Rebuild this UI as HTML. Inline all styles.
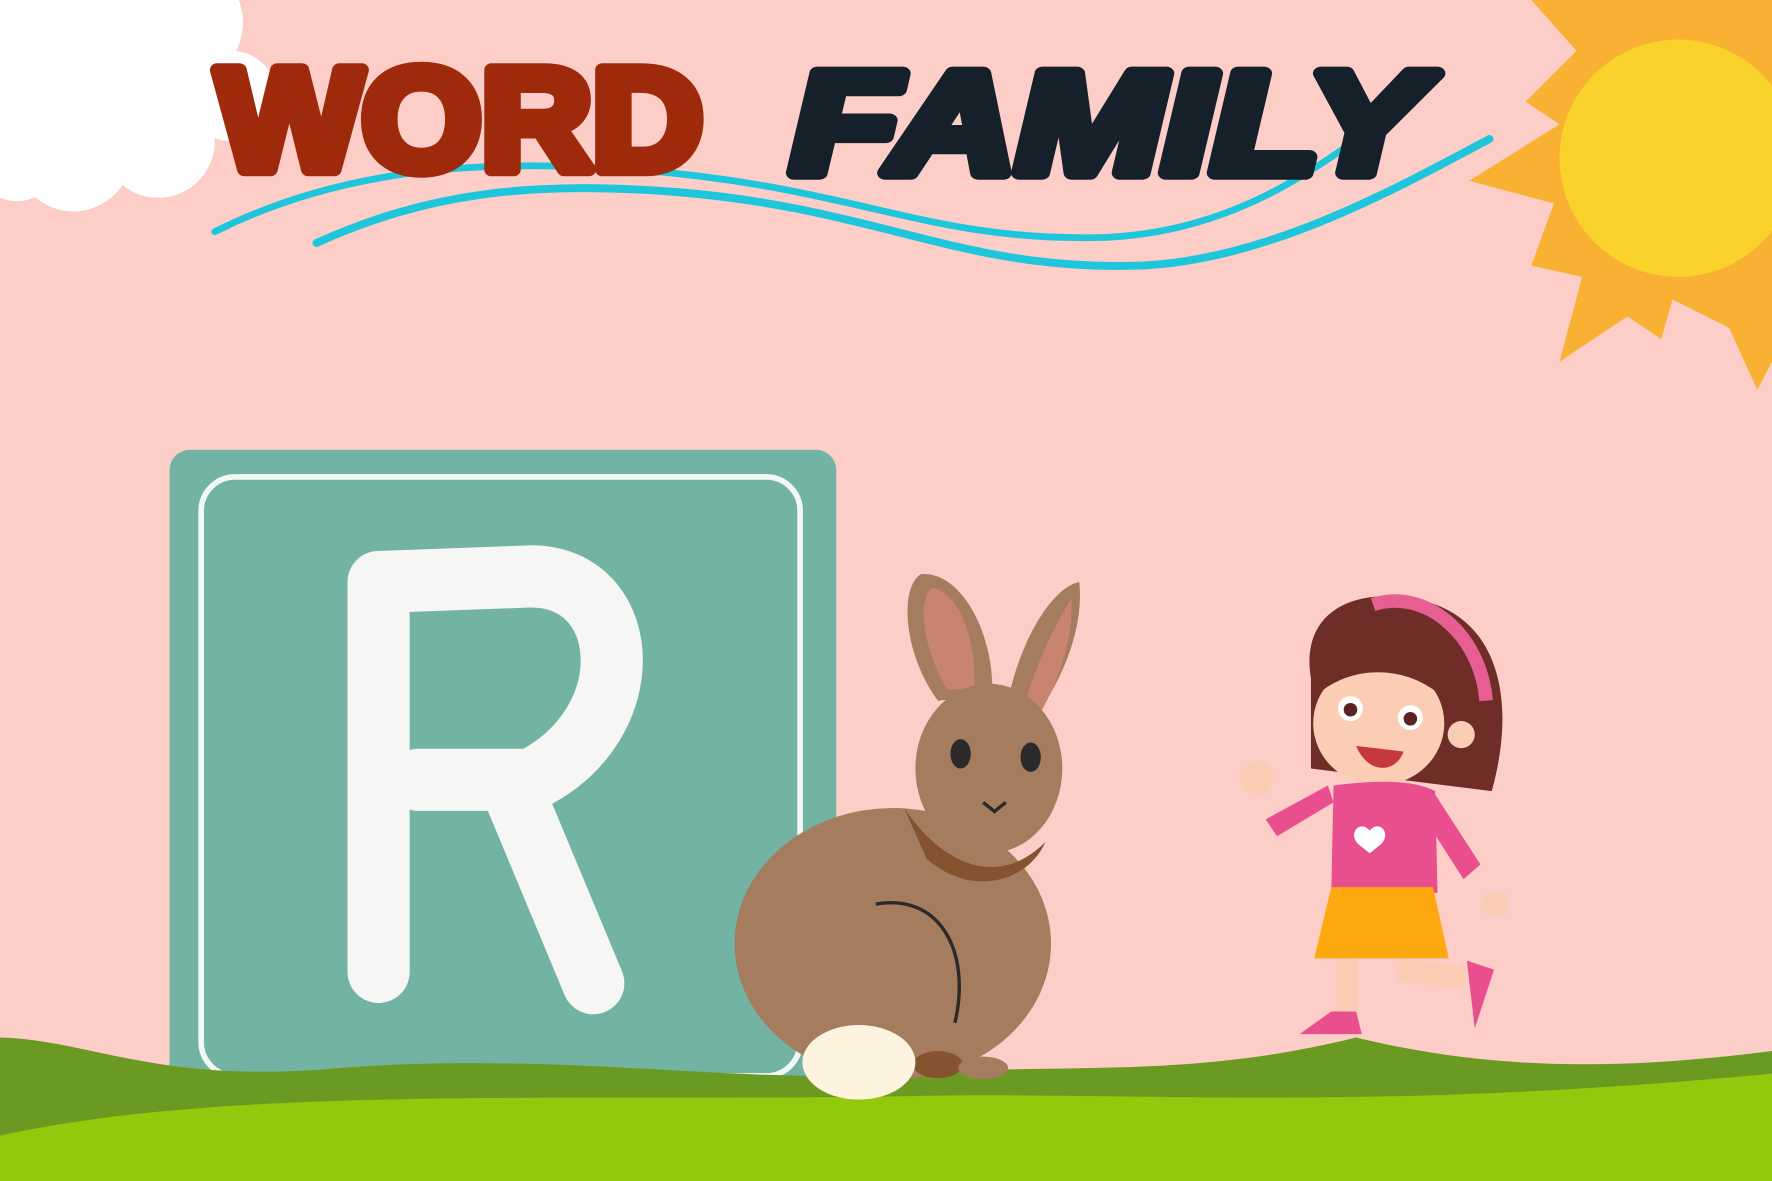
<!DOCTYPE html>
<html><head><meta charset="utf-8"><style>
html,body{margin:0;padding:0;width:1772px;height:1181px;overflow:hidden;background:#FDCEC8}
svg{display:block}
</style></head><body>
<svg width="1772" height="1181" viewBox="0 0 1568 1045" preserveAspectRatio="none" xmlns="http://www.w3.org/2000/svg">
<rect width="1568" height="1045" fill="#FDCEC8"/>
<!-- cloud -->
<g fill="#fff">
<circle cx="70" cy="50" r="110"/><circle cx="160" cy="20" r="55"/><circle cx="65" cy="135" r="52"/><circle cx="140" cy="125" r="50"/><circle cx="15" cy="140" r="38"/><circle cx="205" cy="85" r="40"/>
</g>
<!-- sun -->
<g>
<path fill="#F8B133" d="M1355,0 L1395,45 L1350,90 L1380,110 L1300,160 L1375,180 L1355,235 L1400,245 L1380,320 L1440,280 L1470,300 L1480,265 L1530,290 L1555,345 L1568,320 L1568,0 Z"/>
<circle cx="1485" cy="140" r="105" fill="#FAD22C"/>
</g>
<!-- waves -->
<g fill="none" stroke="#1EC6DC" stroke-linecap="round">
<path d="M190,205 C300,150 420,140 560,150 C760,165 820,215 980,210 C1080,205 1150,160 1205,120" stroke-width="6"/>
<path d="M280,215 C380,170 470,160 600,170 C780,185 850,240 1010,235 C1120,230 1230,170 1318,123" stroke-width="7"/>
</g>
<!-- title -->
<text x="192" y="150" font-family="Liberation Sans, sans-serif" font-weight="bold" font-size="128" fill="#9E2A0B" stroke="#9E2A0B" stroke-width="12" stroke-linejoin="round" textLength="430" lengthAdjust="spacingAndGlyphs">WORD</text>
<text x="700" y="153" font-family="Liberation Sans, sans-serif" font-weight="bold" font-style="italic" font-size="128" fill="#16202A" stroke="#16202A" stroke-width="12" stroke-linejoin="round" textLength="560" lengthAdjust="spacingAndGlyphs">FAMILY</text>
<!-- teal block -->
<rect x="150" y="398" width="590" height="572" rx="18" fill="#72B3A3"/>
<rect x="178" y="422" width="530" height="530" rx="30" fill="none" stroke="#fff" stroke-width="5" opacity="0.9"/>
<path d="M335,860 L335,515 L470,510 C560,510 570,640 470,690 L370,690 M450,690 L525,870" fill="none" stroke="#F6F6F4" stroke-width="55" stroke-linecap="round" stroke-linejoin="round"/>
<!-- grass -->
<path fill="#6A9A22" d="M0,918 C80,920 140,960 300,945 C500,930 650,960 800,950 C950,940 1050,955 1200,918 C1330,950 1450,945 1568,930 L1568,1045 L0,1045 Z"/>
<path fill="#93C90C" d="M0,1005 C200,960 500,975 800,970 C1000,965 1200,985 1568,950 L1568,1045 L0,1045 Z"/>
<!-- rabbit -->
<g>
<path d="M830,620 C800,580 795,520 815,508 C850,505 880,560 878,615 Z" fill="#A67C5F"/>
<path d="M838,610 C815,570 812,530 825,520 C850,525 865,570 862,610 Z" fill="#C98470"/>
<path d="M890,630 C900,570 930,520 955,515 C960,560 935,610 915,635 Z" fill="#A67C5F"/>
<path d="M905,630 C915,590 935,550 948,530 C950,575 930,615 918,635 Z" fill="#C98470"/>
<ellipse cx="790" cy="835" rx="140" ry="120" fill="#A67C5F"/>
<ellipse cx="875" cy="680" rx="65" ry="75" fill="#A67C5F"/>
<path d="M800,715 C830,760 880,790 925,745 C910,780 860,795 820,760 Z" fill="#85532F"/>
<ellipse cx="850" cy="667" rx="9" ry="13" fill="#2A2A2A"/>
<ellipse cx="912" cy="670" rx="9" ry="13" fill="#2A2A2A"/>
<path d="M870,710 l10,8 l10,-8" fill="none" stroke="#2A2A2A" stroke-width="3"/>
<path d="M775,800 C830,790 860,840 845,905" fill="none" stroke="#2A2A2A" stroke-width="3"/>
<ellipse cx="830" cy="942" rx="22" ry="12" fill="#85532F"/>
<ellipse cx="870" cy="945" rx="22" ry="10" fill="#A67C5F"/>
<ellipse cx="760" cy="940" rx="50" ry="33" fill="#FDF3DF"/>
</g>
<!-- girl -->
<g>
<path d="M1160,600 C1150,540 1200,520 1250,530 C1320,540 1345,610 1320,700 L1160,680 Z" fill="#6E2E27"/>
<path d="M1215,535 C1260,520 1310,560 1315,620" fill="none" stroke="#E75E93" stroke-width="12"/>
<ellipse cx="1220" cy="640" rx="58" ry="55" fill="#FCCDB5"/>
<path d="M1165,600 C1200,560 1250,555 1275,590 L1280,620 C1250,590 1200,585 1165,615 Z" fill="#6E2E27"/>
<circle cx="1195" cy="627" r="11" fill="#fff"/><circle cx="1195" cy="628" r="6" fill="#5A2321"/>
<circle cx="1248" cy="635" r="11" fill="#fff"/><circle cx="1248" cy="636" r="6" fill="#5A2321"/>
<path d="M1200,660 C1210,685 1235,685 1242,665 Z" fill="#C6383D"/>
<circle cx="1293" cy="650" r="12" fill="#FCCDB5"/>
<path d="M1180,695 C1220,690 1250,690 1270,700 L1272,790 L1178,790 Z" fill="#E94F8E"/>
<path d="M1180,710 L1130,740 L1120,725 L1175,695 Z" fill="#E94F8E"/>
<path d="M1268,700 L1310,765 L1295,778 L1258,720 Z" fill="#E94F8E"/>
<path d="M1212,735 c-8,-10 -20,2 -10,12 l10,8 l10,-8 c10,-10 -2,-22 -10,-12z" fill="#fff"/>
<path d="M1178,785 L1268,785 L1282,848 L1163,848 Z" fill="#FCA80E"/>
<rect x="1182" y="848" width="20" height="50" fill="#FCCDB5"/>
<path d="M1240,848 L1300,855 L1296,875 L1235,868 Z" fill="#FCCDB5"/>
<path d="M1150,915 L1205,915 L1200,895 L1178,895 Z" fill="#E94F8E"/>
<path d="M1298,850 L1322,858 L1305,910 Z" fill="#E94F8E"/>
<circle cx="1112" cy="688" r="15" fill="#FCCDB5"/>
<circle cx="1322" cy="800" r="12" fill="#FCCDB5"/>
</g>
</svg>
</body></html>
